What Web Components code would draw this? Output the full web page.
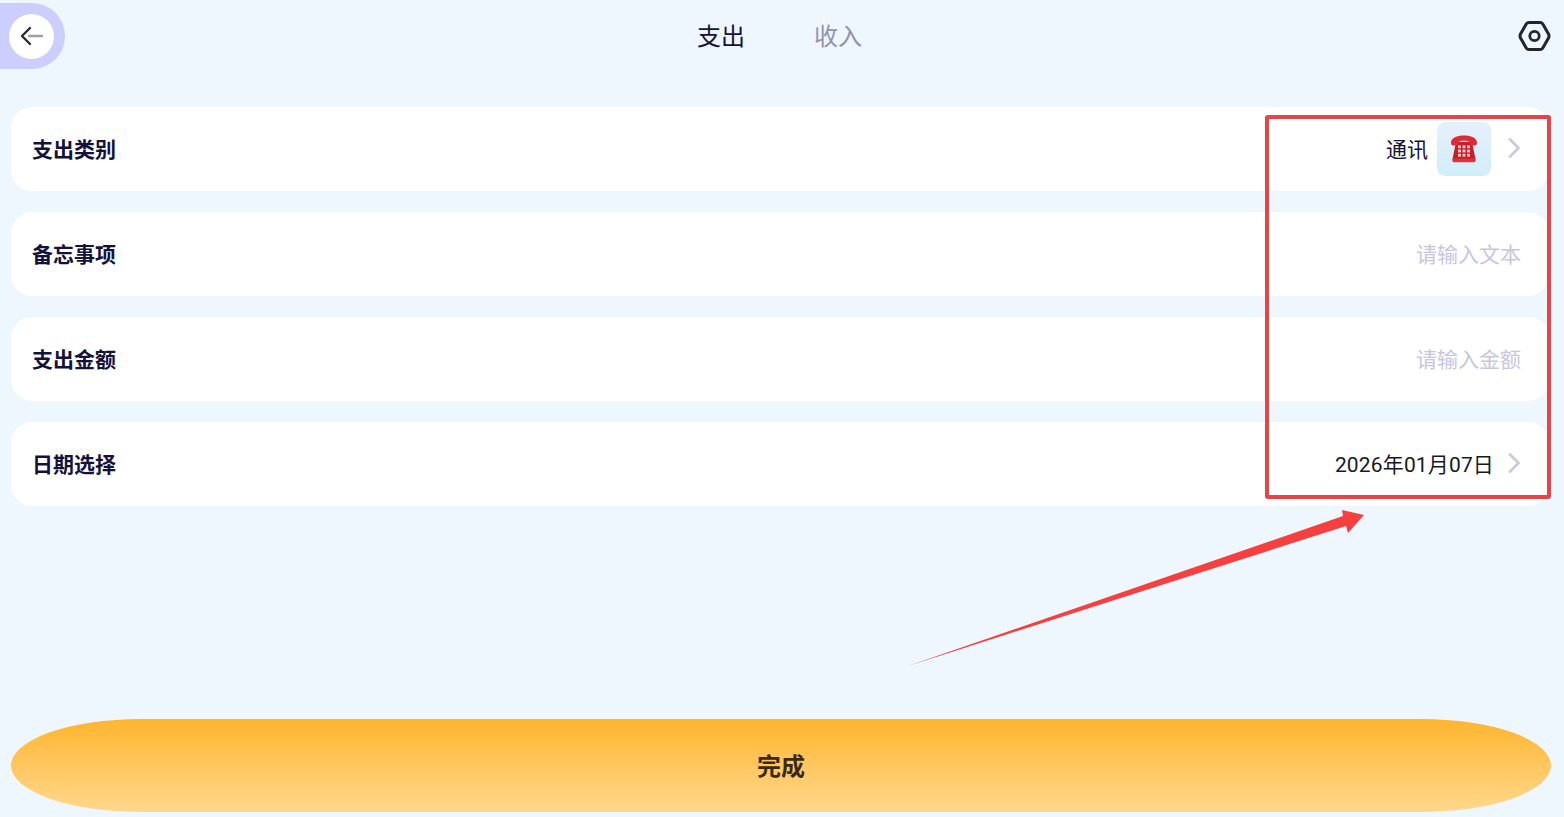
<!DOCTYPE html>
<html lang="zh">
<head>
<meta charset="utf-8">
<title>支出</title>
<style>
  html, body { margin: 0; height: 100%; background: #eef6fe; overflow: hidden; }
  body { font-family: Roboto, "Noto Sans CJK SC", sans-serif; color: #14123c; }
</style>
</head>
<body>
<bill-page>
  <bill-header slot="header"></bill-header>
  <bill-row label="支出类别">
    <span class="value">通讯</span>
    <category-icon></category-icon>
    <row-chevron></row-chevron>
  </bill-row>
  <bill-row label="备忘事项" placeholder="请输入文本"></bill-row>
  <bill-row label="支出金额" placeholder="请输入金额"></bill-row>
  <bill-row label="日期选择">
    <span class="value date">2026年01月07日</span>
    <row-chevron></row-chevron>
  </bill-row>
  <done-button slot="footer">完成</done-button>
</bill-page>
<red-callout></red-callout>

<script>
class BillPage extends HTMLElement {
  connectedCallback() {
    this.attachShadow({ mode: 'open' });
    this.shadowRoot.innerHTML = `
      <style>
        :host { display: flex; flex-direction: column; height: 817px; box-sizing: border-box; }
        .rows {
          display: flex;
          flex-direction: column;
          gap: 21px;
          padding: 0 15px 0 11px;
        }
        .foot { margin-top: auto; padding: 0 13px 5px 11px; }
      </style>
      <slot name="header"></slot>
      <div class="rows"><slot></slot></div>
      <div class="foot"><slot name="footer"></slot></div>
    `;
  }
}
customElements.define('bill-page', BillPage);

class BillHeader extends HTMLElement {
  connectedCallback() {
    this.attachShadow({ mode: 'open' });
    this.shadowRoot.innerHTML = `
      <style>
        :host {
          display: grid;
          grid-template-columns: 1fr auto 1fr;
          align-items: start;
          height: 107px;
          font-size: 24px;
        }
        .back {
          width: 65px;
          height: 66px;
          margin-top: 3px;
          background: #ccceff;
          border-radius: 0 33px 33px 0;
          display: flex;
          align-items: center;
          padding-left: 9px;
          box-sizing: border-box;
        }
        .circle {
          width: 45px;
          height: 45px;
          border-radius: 50%;
          background: #fff;
          display: flex;
          align-items: center;
          justify-content: center;
        }
        .tabs {
          display: flex;
          gap: 69px;
          margin-top: 20px;
          margin-left: -5px;
          line-height: 35px;
          color: #14123c;
        }
        .tabs .off { color: #9293aa; }
        .gear { justify-self: end; margin: 20px 13px 0 0; display: block; }
      </style>
      <div class="back"><div class="circle">
        <svg width="26" height="26" viewBox="0 0 26 26" fill="none" stroke-linecap="round" stroke-linejoin="round">
          <path d="M10 13H23" stroke="#a0a0a6" stroke-width="2.4"/>
          <path d="M11 5L3 13L11 21" stroke="#2b2b33" stroke-width="2.4"/>
        </svg>
      </div></div>
      <div class="tabs"><span>支出</span><span class="off">收入</span></div>
      <svg class="gear" width="34" height="32" viewBox="0 0 34 32" fill="none" stroke="#24242e" stroke-width="3" stroke-linejoin="round">
        <path d="M12 2.5H23C24.2 2.5 25.2 3.1 25.8 4.1L31.2 13.4C32.2 15 32.2 17 31.2 18.6L25.8 27.9C25.2 28.9 24.2 29.5 23 29.5H12C10.8 29.5 9.8 28.9 9.2 27.9L3.8 18.6C2.8 17 2.8 15 3.8 13.4L9.2 4.1C9.8 3.1 10.8 2.5 12 2.5Z"/>
        <circle cx="17.5" cy="16" r="4.7" stroke-width="2.8"/>
      </svg>
    `;
  }
}
customElements.define('bill-header', BillHeader);

class BillRow extends HTMLElement {
  connectedCallback() {
    const label = this.getAttribute('label');
    const placeholder = this.getAttribute('placeholder');
    this.attachShadow({ mode: 'open' });
    this.shadowRoot.innerHTML = `
      <style>
        :host {
          display: flex;
          align-items: center;
          justify-content: space-between;
          height: 84px;
          padding: 0 28px 0 21px;
          background: #fff;
          border-radius: 21px;
          font-size: 21px;
        }
        .label { font-weight: 700; color: #14123c; margin-top: -2px; }
        .right { display: flex; align-items: center; color: #14123c; }
        .ph { color: #c6c6df; margin-top: -2px; }
        ::slotted(.value) { color: #14123c; margin-top: -2px; }
        ::slotted(.date) { color: #18181f; letter-spacing: 0.15px; }
      </style>
      <span class="label">${label}</span>
      <div class="right">
        ${placeholder ? `<span class="ph">${placeholder}</span>` : '<slot></slot>'}
      </div>
    `;
  }
}
customElements.define('bill-row', BillRow);

class CategoryIcon extends HTMLElement {
  connectedCallback() {
    this.attachShadow({ mode: 'open' });
    this.shadowRoot.innerHTML = `
      <style>
        :host {
          display: flex;
          align-items: center;
          justify-content: center;
          width: 54px;
          height: 54px;
          margin-left: 9px;
          margin-right: 3px;
          border-radius: 8px;
          background: linear-gradient(180deg, #e6f0fb, #d0eefa);
        }
      </style>
      <svg width="28" height="30" viewBox="0 0 28 30">
        <path d="M6 8H22L25.5 25C25.8 27 25 28 23.5 28H4.5C3 28 2.2 27 2.5 25Z" fill="#c91f28"/>
        <path d="M1 8.5C1 4 7 1.5 14 1.5S27 4 27 8.5C27 10.5 26.4 11.5 24.5 11.5H21.5C20 11.5 19.8 10.4 19.8 8.8C19.8 7.4 17 6.8 14 6.8S8.2 7.4 8.2 8.8C8.2 10.4 8 11.5 6.5 11.5H3.5C1.6 11.5 1 10.5 1 8.5Z" fill="#e02a33"/>
        <rect x="2.6" y="24.8" width="22.8" height="3.4" rx="1.2" fill="#e0343c"/>
        <g fill="#eec9cc">
          <rect x="8" y="11.4" width="3" height="2.8"/><rect x="12.5" y="11.4" width="3" height="2.8"/><rect x="17" y="11.4" width="3" height="2.8"/>
          <rect x="8" y="15.6" width="3" height="2.8"/><rect x="12.5" y="15.6" width="3" height="2.8"/><rect x="17" y="15.6" width="3" height="2.8"/>
          <rect x="8" y="19.8" width="3" height="2.8"/><rect x="12.5" y="19.8" width="3" height="2.8"/><rect x="17" y="19.8" width="3" height="2.8"/>
        </g>
      </svg>
    `;
  }
}
customElements.define('category-icon', CategoryIcon);

class RowChevron extends HTMLElement {
  connectedCallback() {
    this.attachShadow({ mode: 'open' });
    this.shadowRoot.innerHTML = `
      <style>
        :host { display: block; width: 12px; height: 20px; margin: -3px 1px 0 14px; }
        svg { display: block; }
      </style>
      <svg width="12" height="20" viewBox="0 0 12 20" fill="none" stroke="#cbcbde" stroke-width="2.8" stroke-linecap="round" stroke-linejoin="round">
        <path d="M2 1.5L10.5 10L2 18.5"/>
      </svg>
    `;
  }
}
customElements.define('row-chevron', RowChevron);

class DoneButton extends HTMLElement {
  connectedCallback() {
    this.attachShadow({ mode: 'open' });
    this.shadowRoot.innerHTML = `
      <style>
        :host {
          display: flex;
          align-items: center;
          justify-content: center;
          height: 91px;
          padding-bottom: 2px;
          border-radius: 130px / 46.5px;
          background: linear-gradient(180deg, #ffb52f, #ffd88d);
          font-size: 24px;
          font-weight: 700;
          color: #3a2a12;
        }
      </style>
      <slot></slot>
    `;
  }
}
customElements.define('done-button', DoneButton);

// annotation drawn over the screenshot, sits above the rows
class RedCallout extends HTMLElement {
  connectedCallback() {
    this.attachShadow({ mode: 'open' });
    this.shadowRoot.innerHTML = `
      <style>
        :host { position: absolute; left: 0; top: 0; width: 1564px; height: 817px; pointer-events: none; }
        .box {
          position: absolute;
          left: 1265px;
          top: 115px;
          width: 286px;
          height: 384px;
          box-sizing: border-box;
          border: 4px solid #e84347;
          border-radius: 3px;
        }
        svg { position: absolute; left: 0; top: 0; }
      </style>
      <div class="box"></div>
      <svg width="1564" height="817" viewBox="0 0 1564 817">
        <path d="M908 666L1343 516L1342 510L1364 515L1348 533L1346 526Z" fill="#f5403f"/>
      </svg>
    `;
  }
}
customElements.define('red-callout', RedCallout);
</script>
</body>
</html>
